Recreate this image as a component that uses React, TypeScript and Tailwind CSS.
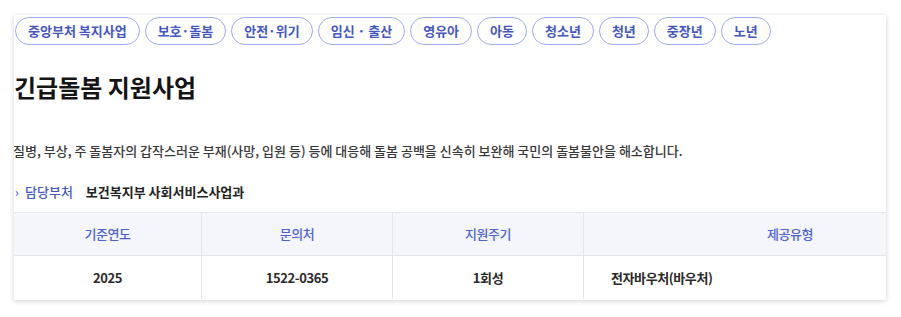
const tags = [
    "중앙부처 복지사업",
    "보호·돌봄",
    "안전·위기",
    "임신 · 출산",
    "영유아",
    "아동",
    "청소년",
    "청년",
    "중장년",
    "노년",
];

const table = {
    head: ["기준연도", "문의처", "지원주기", "제공유형"],
    row: ["2025", "1522-0365", "1회성", "전자바우처(바우처)"],
};

export default function App() {
    return (
        <div
            className="w-full h-[317px] bg-white pt-[15px] pl-[14px] pr-[15px]"
            style={{ fontFamily: '"Noto Sans CJK KR", "Noto Sans", sans-serif' }}
        >
            <div className="h-[285px] overflow-hidden bg-white shadow-[0_1px_5px_rgba(0,0,0,0.18)]">
                {/* category tags */}
                <div className="flex gap-[5px] pt-[2px] pl-[1px]">
                    {tags.map((t) => (
                        <span
                            key={t}
                            className="h-[28px] px-[12px] flex items-center rounded-full border-[1.5px] border-[#9eabec] text-[13px] font-semibold text-[#4456c2] whitespace-nowrap"
                        >
                            {t}
                        </span>
                    ))}
                </div>

                {/* title + description */}
                <h1 className="mt-[26px] text-[24px] leading-[32px] font-bold text-[#151515]">
                    긴급돌봄 지원사업
                </h1>
                <p className="mt-[39px] text-[13px] leading-[18px] font-medium text-[#383838] whitespace-nowrap -ml-[1px]">
                    질병, 부상, 주 돌봄자의 갑작스러운 부재(사망, 입원 등) 등에 대응해 돌봄 공백을 신속히 보완해 국민의 돌봄불안을 해소합니다.
                </p>

                <div className="mt-[23px] flex items-center text-[13px] leading-[18px] font-medium">
                    <span className="text-[#4456c2] text-[12px] w-[11px] pl-[1px]">›</span>
                    <span className="text-[#4456c2]">담당부처</span>
                    <span className="ml-[13px] text-[#222] font-semibold">보건복지부 사회서비스사업과</span>
                </div>

                {/* info table */}
                <div className="mt-[11px] w-[982px] border-t border-[#e3e6ee] text-[13px] tracking-[-0.4px] font-medium">
                    <div className="grid grid-cols-[188px_191px_191px_1fr] h-[43px] bg-[#f4f6fb] border-b border-[#e3e6ee] text-[#4e62cf]">
                        {table.head.map((h, i) => (
                            <div
                                key={h}
                                className={`flex items-center justify-center ${i < 3 ? "border-r border-[#e3e6ee]" : ""}`}
                            >
                                {h}
                            </div>
                        ))}
                    </div>
                    <div className="grid grid-cols-[188px_191px_191px_1fr] h-[43px] text-[#2a2a2a] font-semibold">
                        {table.row.map((c, i) => (
                            <div
                                key={c}
                                className={
                                    i < 3
                                        ? "flex items-center justify-center border-r border-[#e3e6ee]"
                                        : "flex items-center pl-[27px]"
                                }
                            >
                                {c}
                            </div>
                        ))}
                    </div>
                </div>
            </div>
        </div>
    );
}
